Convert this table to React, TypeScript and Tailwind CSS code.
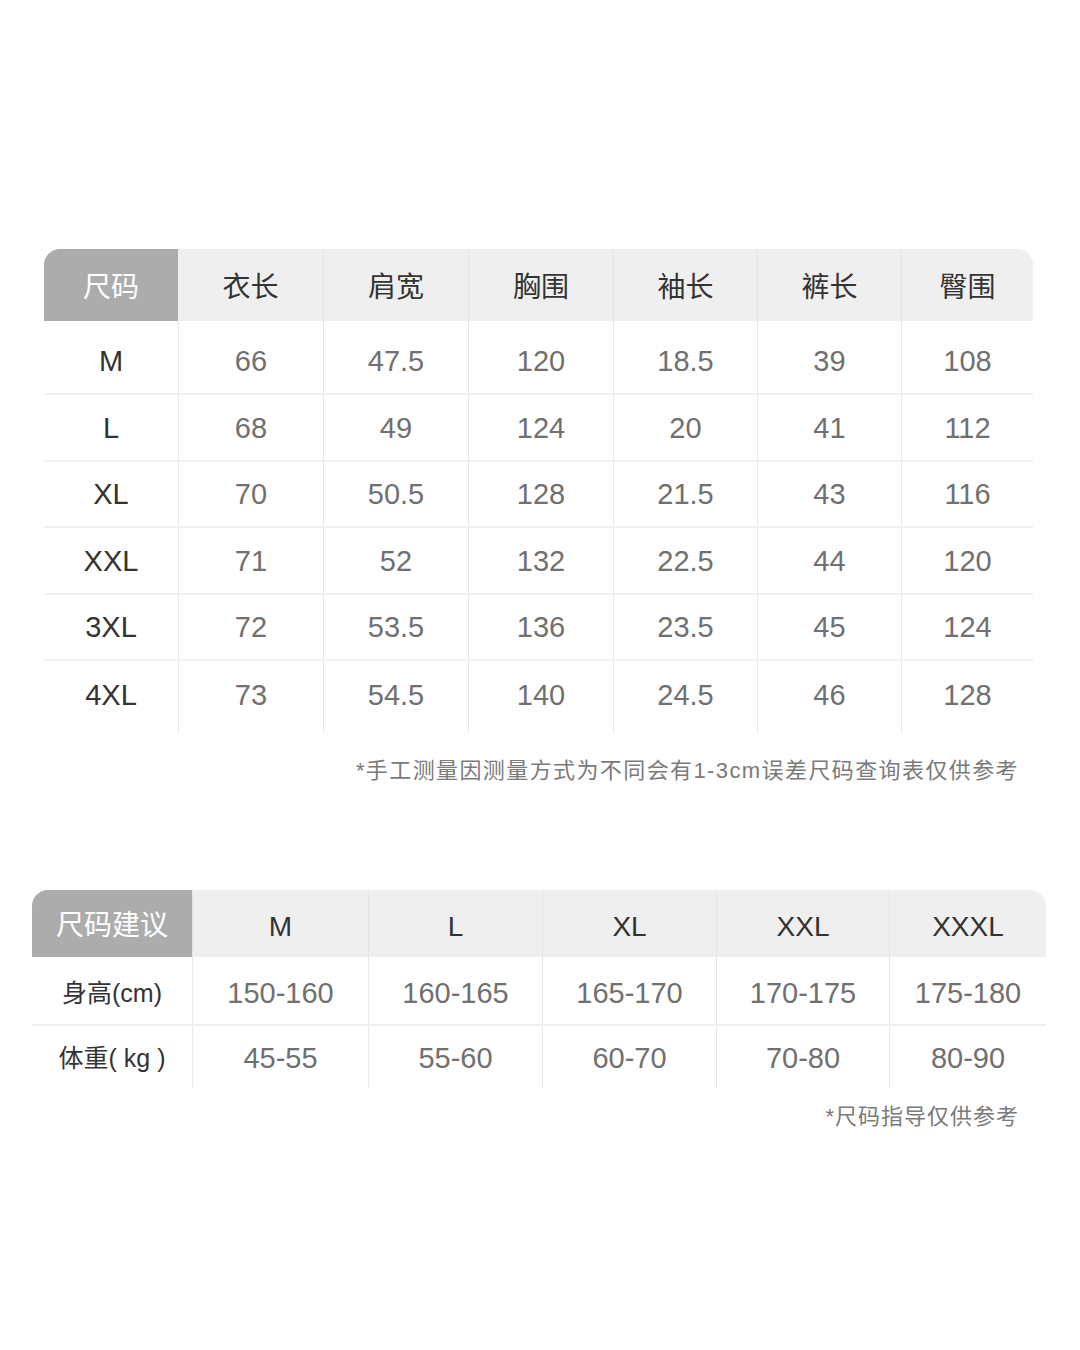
const sizeHeaders = ['衣长', '肩宽', '胸围', '袖长', '裤长', '臀围']

const sizeRows = [
  { size: 'M', values: ['66', '47.5', '120', '18.5', '39', '108'], h: 'h-[72px]', pad: 'pt-[10px]' },
  { size: 'L', values: ['68', '49', '124', '20', '41', '112'], h: 'h-[67px]', pad: 'pt-[3px]' },
  { size: 'XL', values: ['70', '50.5', '128', '21.5', '43', '116'], h: 'h-[66px]', pad: 'pt-[2px]' },
  { size: 'XXL', values: ['71', '52', '132', '22.5', '44', '120'], h: 'h-[67px]', pad: 'pt-[2px]' },
  { size: '3XL', values: ['72', '53.5', '136', '23.5', '45', '124'], h: 'h-[66px]', pad: 'pt-[2px]' },
  { size: '4XL', values: ['73', '54.5', '140', '24.5', '46', '128'], h: 'h-[74px]', pad: 'pb-[2px]' },
]

const adviceHeaders = ['M', 'L', 'XL', 'XXL', 'XXXL']

const adviceRows = [
  { label: '身高(cm)', values: ['150-160', '160-165', '165-170', '170-175', '175-180'], h: 'h-[67px]', pad: 'pt-[6px]' },
  { label: '体重( kg )', values: ['45-55', '55-60', '60-70', '70-80', '80-90'], h: 'h-[64px]', pad: 'pt-[4px]' },
]

const grid1 = 'grid grid-cols-[134px_145px_145px_145px_144px_144px_132px]'
const grid2 = 'grid grid-cols-[160px_176px_174px_174px_173px_157px]'

export default function App() {
  return (
    <div className="w-[1080px] h-[1350px] bg-white font-['Liberation_Sans','Noto_Sans_CJK_SC',sans-serif] pt-[249px]">
      {/* Size chart */}
      <div className="ml-[44px] w-[989px]">
        <div className={`${grid1} h-[72px] rounded-t-[16px] overflow-hidden bg-[#efefef]`}>
          <div className="flex items-center justify-center bg-[#acacac] text-white text-[28px] pt-[6px]">尺码</div>
          {sizeHeaders.map((h, i) => (
            <div
              key={h}
              className={`flex items-center justify-center text-[28px] text-[#333] pt-[6px] ${i > 0 ? 'border-l border-[#e4e4e4]' : ''}`}
            >
              {h}
            </div>
          ))}
        </div>
        {sizeRows.map((row, r) => (
          <div key={row.size} className={`${grid1} ${row.h} ${r > 0 ? 'border-t-2 border-[#f0f0f0]' : ''}`}>
            <div className={`flex items-center justify-center text-[29px] text-[#333] ${row.pad}`}>{row.size}</div>
            {row.values.map((v, i) => (
              <div
                key={i}
                className={`flex items-center justify-center border-l border-[#e8e8e8] text-[29px] text-[#707070] ${row.pad}`}
              >
                {v}
              </div>
            ))}
          </div>
        ))}
      </div>
      <p className="mt-[25px] mr-[61px] text-right text-[22px] tracking-[1.4px] text-[#7a7a7a] leading-[26px]">
        *手工测量因测量方式为不同会有1-3cm误差尺码查询表仅供参考
      </p>

      {/* Size advice */}
      <div className="ml-[32px] w-[1014px] mt-[106px]">
        <div className={`${grid2} h-[67px] rounded-t-[16px] overflow-hidden bg-[#efefef]`}>
          <div className="flex items-center justify-center bg-[#acacac] text-white text-[28px] pt-[4px]">尺码建议</div>
          {adviceHeaders.map(h => (
            <div key={h} className="flex items-center justify-center border-l border-[#e4e4e4] text-[28px] text-[#333] pt-[6px]">
              {h}
            </div>
          ))}
        </div>
        {adviceRows.map((row, r) => (
          <div key={row.label} className={`${grid2} ${row.h} ${r > 0 ? 'border-t-2 border-[#f0f0f0]' : ''}`}>
            <div className={`flex items-center justify-center text-[25px] text-[#333] ${row.pad}`}>{row.label}</div>
            {row.values.map((v, i) => (
              <div
                key={i}
                className={`flex items-center justify-center border-l border-[#e8e8e8] text-[29px] text-[#707070] ${row.pad}`}
              >
                {v}
              </div>
            ))}
          </div>
        ))}
      </div>
      <p className="mt-[16px] mr-[61px] text-right text-[22px] tracking-[1px] text-[#7a7a7a] leading-[26px]">
        *尺码指导仅供参考
      </p>
    </div>
  )
}
